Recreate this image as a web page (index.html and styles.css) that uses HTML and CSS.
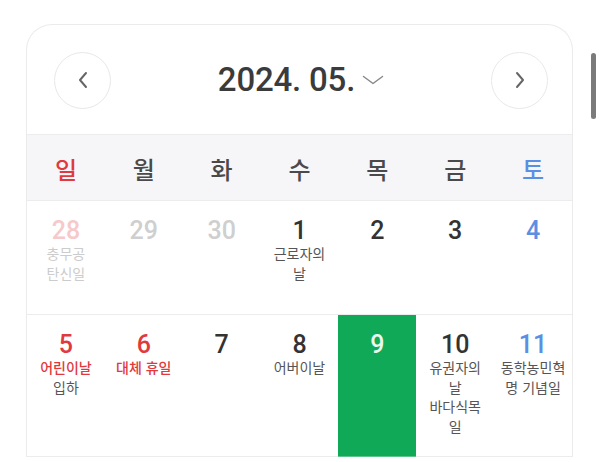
FILE: index.html
```html
<!DOCTYPE html>
<html lang="ko">
<head>
<meta charset="utf-8">
<title>2024. 05.</title>
<link rel="stylesheet" href="styles.css">
</head>
<body>
<div class="scrollbar"></div>
<div class="card">
  <header class="cal-head">
    <button class="nav-btn" aria-label="이전 달">
      <svg width="14" height="18" viewBox="0 0 14 18"><path d="M10 2 L4 9 L10 16" fill="none" stroke="#666" stroke-width="2" stroke-linecap="round" stroke-linejoin="round"/></svg>
    </button>
    <div class="title">
      <span class="title-text">2024. 05.</span>
      <svg class="caret" width="22" height="10" viewBox="0 0 22 10"><path d="M1.5 1.5 L11 8.5 L20.5 1.5" fill="none" stroke="#888" stroke-width="1.5" stroke-linecap="round" stroke-linejoin="round"/></svg>
    </div>
    <button class="nav-btn" aria-label="다음 달">
      <svg width="14" height="18" viewBox="0 0 14 18"><path d="M4 2 L10 9 L4 16" fill="none" stroke="#666" stroke-width="2" stroke-linecap="round" stroke-linejoin="round"/></svg>
    </button>
  </header>

  <div class="weekdays">
    <div class="wd sun">일</div>
    <div class="wd">월</div>
    <div class="wd">화</div>
    <div class="wd">수</div>
    <div class="wd">목</div>
    <div class="wd">금</div>
    <div class="wd sat">토</div>
  </div>

  <div class="week">
    <div class="day other sun"><span class="num">28</span><span class="ev">충무공<br>탄신일</span></div>
    <div class="day other"><span class="num">29</span></div>
    <div class="day other"><span class="num">30</span></div>
    <div class="day"><span class="num">1</span><span class="ev">근로자의<br>날</span></div>
    <div class="day"><span class="num">2</span></div>
    <div class="day"><span class="num">3</span></div>
    <div class="day sat"><span class="num">4</span></div>
  </div>

  <div class="week">
    <div class="day sun"><span class="num">5</span><span class="ev holiday">어린이날</span><span class="ev">입하</span></div>
    <div class="day sun"><span class="num">6</span><span class="ev holiday">대체 휴일</span></div>
    <div class="day"><span class="num">7</span></div>
    <div class="day"><span class="num">8</span><span class="ev">어버이날</span></div>
    <div class="day today"><span class="num">9</span></div>
    <div class="day"><span class="num">10</span><span class="ev">유권자의<br>날</span><span class="ev">바다식목<br>일</span></div>
    <div class="day sat"><span class="num">11</span><span class="ev">동학농민혁<br>명 기념일</span></div>
  </div>
</div>
</body>
</html>
```

FILE: styles.css
```css
html, body {
  margin: 0;
  padding: 0;
  background: #ffffff;
  overflow: hidden;
}

body {
  padding: 24px 27px 0 26px;
  font-family: "Noto Sans CJK KR", "Noto Sans", sans-serif;
  color: #333;
}

.scrollbar {
  position: fixed;
  left: 591px;
  top: 53px;
  width: 5px;
  height: 66px;
  border-radius: 3px;
  background: #7b7b7b;
}

.card {
  border: 1px solid #ebebeb;
  border-radius: 26px 26px 0 0;
  border-bottom: none;
  background: #fff;
  overflow: hidden;
}

.cal-head {
  height: 109px;
  display: flex;
  align-items: center;
  justify-content: space-between;
  padding: 0 24px 0 27px;
}

.nav-btn {
  width: 57px;
  height: 57px;
  border-radius: 50%;
  border: 1px solid #e8e8e8;
  background: #fff;
  padding: 0;
  display: flex;
  align-items: center;
  justify-content: center;
  margin-top: 1px;
}

.title {
  display: flex;
  align-items: center;
  gap: 7px;
}

.title-text {
  font-family: Roboto, "Liberation Sans", sans-serif;
  font-size: 33px;
  font-weight: 500;
  color: #3b3b3b;
  letter-spacing: -0.2px;
}

.caret {
  margin-top: 1px;
}

.weekdays {
  display: grid;
  grid-template-columns: repeat(7, 1fr);
  background: #f6f6f8;
  border-top: 1px solid #ececec;
  border-bottom: 1px solid #ececec;
  height: 65px;
}

.wd {
  display: flex;
  align-items: center;
  justify-content: center;
  font-size: 24px;
  font-weight: 500;
  color: #4a4a4a;
  padding-top: 1px;
}

.wd.sun { color: #e0393e; }
.wd.sat { color: #5b8fe4; }

.week {
  display: grid;
  grid-template-columns: repeat(7, 1fr);
}

.day {
  box-sizing: border-box;
  min-height: 114px;
  padding: 17px 2px 20px;
  border-bottom: 1px solid #ececec;
  display: flex;
  flex-direction: column;
  align-items: center;
  text-align: center;
}

.num {
  font-family: Roboto, "Liberation Sans", sans-serif;
  font-size: 25px;
  font-weight: 500;
  line-height: 26px;
  color: #333;
}

.ev {
  font-size: 14px;
  line-height: 19.5px;
  color: #555;
  white-space: nowrap;
}

.day.sun .num,
.ev.holiday { color: #e0393e; }

.day.sat .num { color: #5b8fe4; }

.ev.holiday { font-weight: 500; }

.day.other .num { color: #cfcfcf; }
.day.other.sun .num { color: #f6c9cb; }
.day.other .ev { color: #cccccc; }

.day.today {
  background: #0fa958;
  border-bottom-color: #5dc48c;
}

.day.today .num { color: #eaf8ef; }
```
